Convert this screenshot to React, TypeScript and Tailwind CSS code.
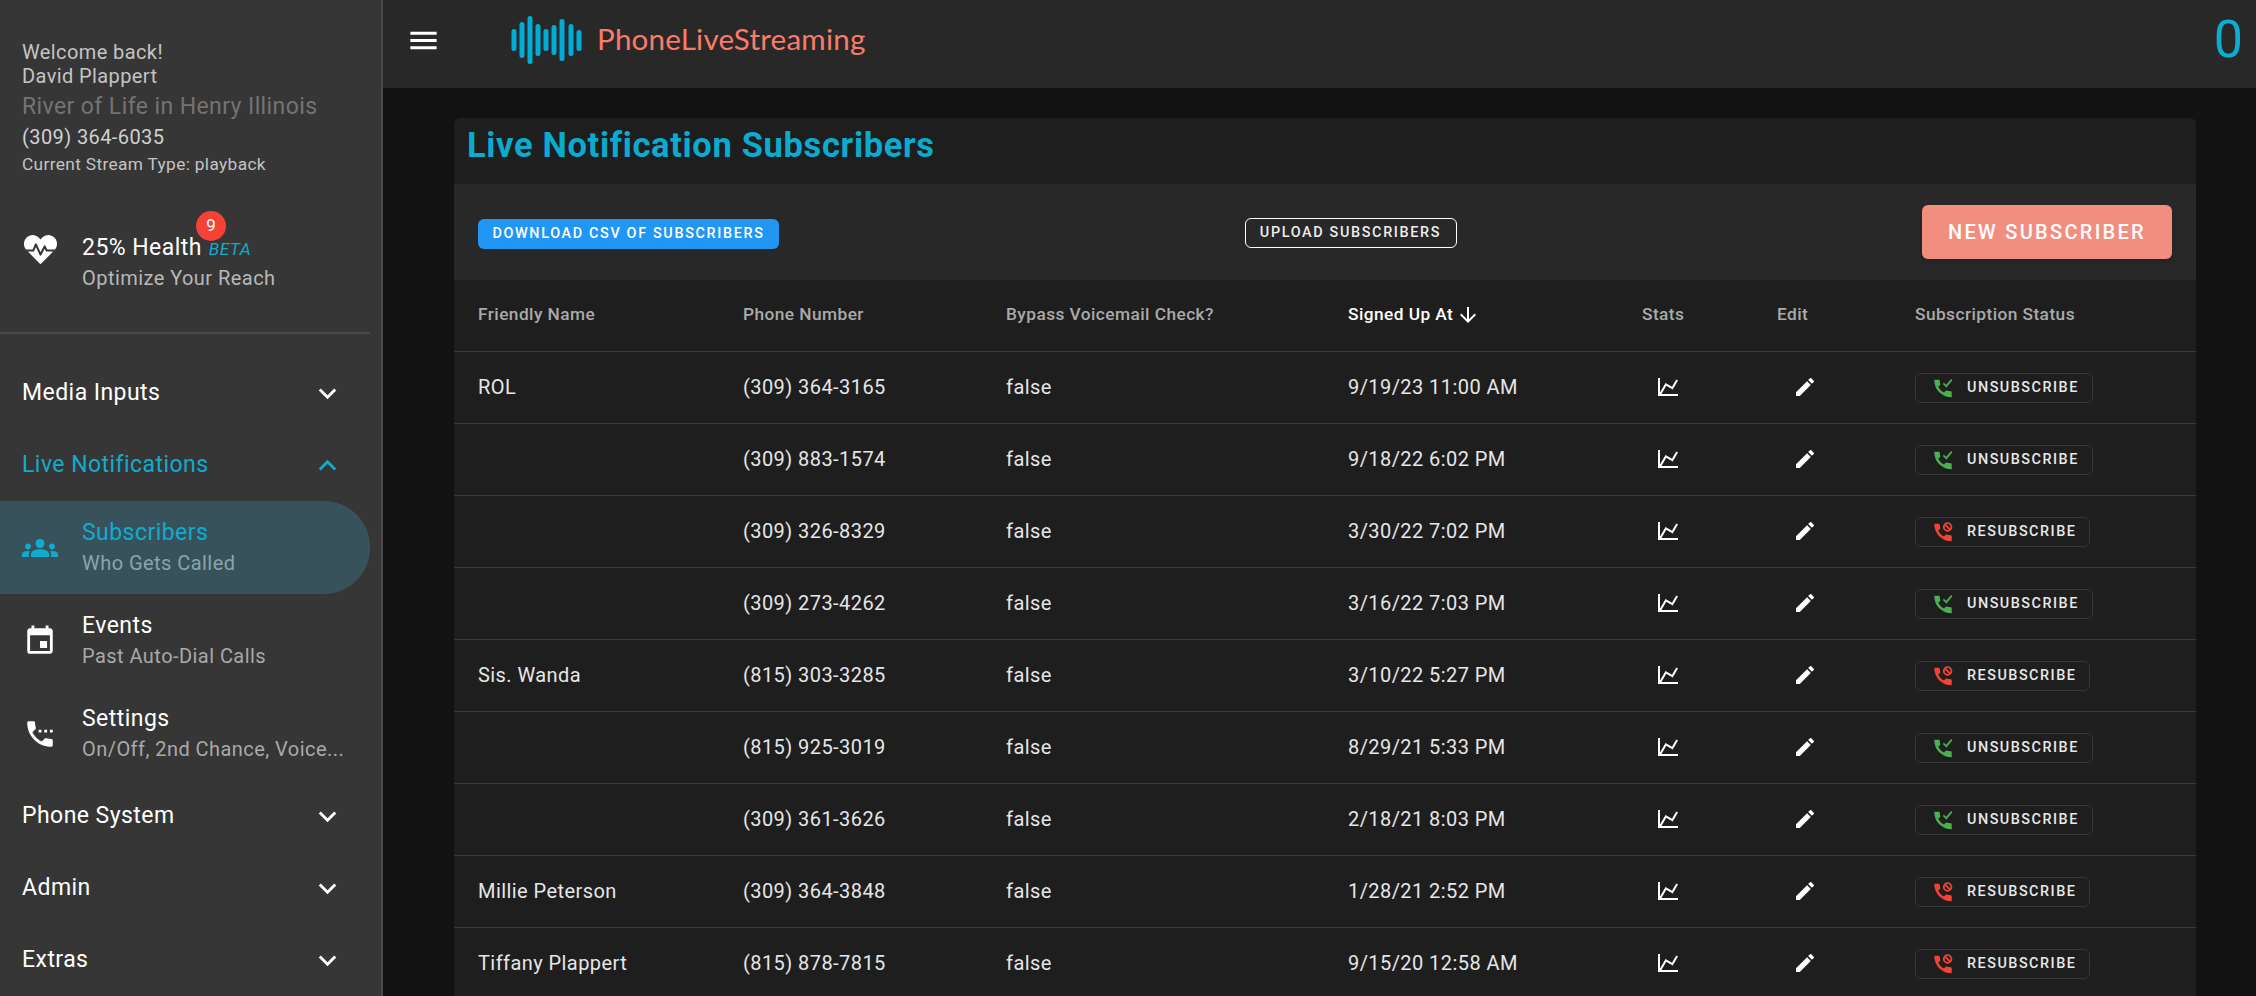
import { FaHeartbeat } from 'react-icons/fa';
import {
  MdArrowDownward,
  MdEdit,
  MdEvent,
  MdExpandLess,
  MdExpandMore,
  MdGroups,
  MdMenu,
  MdSettingsPhone,
} from 'react-icons/md';

type Subscriber = {
  name: string;
  phone: string;
  signedUp: string;
  subscribed: boolean;
};

const SUBSCRIBERS: Subscriber[] = [
  { name: 'ROL', phone: '(309) 364-3165', signedUp: '9/19/23 11:00 AM', subscribed: true },
  { name: '', phone: '(309) 883-1574', signedUp: '9/18/22 6:02 PM', subscribed: true },
  { name: '', phone: '(309) 326-8329', signedUp: '3/30/22 7:02 PM', subscribed: false },
  { name: '', phone: '(309) 273-4262', signedUp: '3/16/22 7:03 PM', subscribed: true },
  { name: 'Sis. Wanda', phone: '(815) 303-3285', signedUp: '3/10/22 5:27 PM', subscribed: false },
  { name: '', phone: '(815) 925-3019', signedUp: '8/29/21 5:33 PM', subscribed: true },
  { name: '', phone: '(309) 361-3626', signedUp: '2/18/21 8:03 PM', subscribed: true },
  { name: 'Millie Peterson', phone: '(309) 364-3848', signedUp: '1/28/21 2:52 PM', subscribed: false },
  { name: 'Tiffany Plappert', phone: '(815) 878-7815', signedUp: '9/15/20 12:58 AM', subscribed: false },
];

// x, top, bottom of each logo bar
const LOGO_BARS = [
  [3, 14, 36],
  [11, 7, 43],
  [19, 1, 49],
  [27, 9, 41],
  [35, 14, 36],
  [43, 10, 40],
  [51, 4, 46],
  [60, 9, 41],
  [68, 15, 36],
];

function Logo() {
  return (
    <div className="flex items-center">
      <svg width="72" height="50" viewBox="0 0 72 50" className="shrink-0">
        {LOGO_BARS.map(([x, top, bottom]) => (
          <rect key={x} x={x - 2.5} y={top} width="5" height={bottom - top} rx="2.5" fill="#00acd3" />
        ))}
      </svg>
      <span className="mb-[2px] ml-[14px] font-['Lato',sans-serif] text-[29.6px] leading-none tracking-[0.2px] text-[#fb7b68]">
        PhoneLiveStreaming
      </span>
    </div>
  );
}

function SectionRow({ label, open }: { label: string; open?: boolean }) {
  return (
    <div
      className={`flex h-[72px] w-[370px] items-center justify-between pl-[22px] pr-[25px] text-[23px] tracking-[0.45px] ${
        open ? 'text-[#0eaccf]' : 'text-white'
      }`}
    >
      <span>{label}</span>
      {open ? <MdExpandLess size={35} /> : <MdExpandMore size={35} />}
    </div>
  );
}

function SubRow({
  icon,
  title,
  sub,
  active,
}: {
  icon: React.ReactNode;
  title: string;
  sub: string;
  active?: boolean;
}) {
  return (
    <div
      className={`flex h-[93px] w-[370px] items-center rounded-r-[46px] pl-[22px] ${
        active ? 'bg-[#38525c]' : ''
      }`}
    >
      <div className={`flex w-[36px] shrink-0 justify-center ${active ? 'text-[#0eaccf]' : 'text-white'}`}>
        {icon}
      </div>
      <div className="ml-[24px] min-w-0 tracking-[0.45px]">
        <div className={`text-[23px] leading-[30px] ${active ? 'text-[#0eaccf]' : 'text-white'}`}>{title}</div>
        <div className={`whitespace-nowrap text-[20px] leading-[30px] ${active ? 'text-[#8ba3ad]' : 'text-[#a9a9a9]'}`}>
          {sub}
        </div>
      </div>
    </div>
  );
}

function Sidebar() {
  return (
    <aside className="w-[383px] shrink-0 border-r-2 border-[#4a4a4a] bg-[#363636] font-['Roboto',sans-serif]">
      <div className="pl-[22px] pt-[40px] tracking-[0.4px]">
        <div className="text-[20px] leading-[24px] text-[#c4c4c4]">Welcome back!</div>
        <div className="text-[20px] leading-[25px] text-[#c4c4c4]">David Plappert</div>
        <div className="text-[23px] leading-[36px] text-[#737373]">River of Life in Henry Illinois</div>
        <div className="text-[20px] leading-[24px] text-[#d0d0d0]">(309) 364-6035</div>
        <div className="mt-[3px] text-[17.3px] leading-[24px] tracking-[0.35px] text-[#c4c4c4]">
          Current Stream Type: playback
        </div>
      </div>

      <div className="relative mt-[58px] flex h-[60px] w-[370px] items-start pl-[22px]">
        <FaHeartbeat size={33} className="ml-[2px] mt-[-1px] shrink-0 text-white" />
        <div className="ml-[25px] tracking-[0.45px]">
          <div className="flex items-baseline text-[23px] leading-[27px] text-white">
            25% Health
            <span className="ml-[7px] text-[17.3px] italic text-[#0eaccf]">BETA</span>
          </div>
          <div className="text-[20px] leading-[30px] text-[#b8b8b8]">Optimize Your Reach</div>
        </div>
        <span className="absolute left-[196px] top-[-23px] flex size-[30px] items-center justify-center rounded-full bg-[#f44336] text-[17px] text-white">
          9
        </span>
      </div>

      <div className="mt-[38px] h-[2px] w-[370px] bg-[#4a4a4a]" />

      <div className="mt-[23px]">
        <SectionRow label="Media Inputs" />
        <SectionRow label="Live Notifications" open />
        <SubRow icon={<MdGroups size={38} />} title="Subscribers" sub="Who Gets Called" active />
        <SubRow icon={<MdEvent size={34} />} title="Events" sub="Past Auto-Dial Calls" />
        <SubRow icon={<MdSettingsPhone size={34} />} title="Settings" sub="On/Off, 2nd Chance, Voice..." />
        <SectionRow label="Phone System" />
        <SectionRow label="Admin" />
        <SectionRow label="Extras" />
      </div>
    </aside>
  );
}

function StatsIcon() {
  return (
    <svg viewBox="0 0 24 24" className="size-[24px] fill-white">
      <path d="M16,11.78L20.24,4.45L21.97,5.45L16.74,14.5L10.23,10.75L5.46,19H22V21H2V3H4V17.54L9.5,8L16,11.78Z" />
    </svg>
  );
}

function StatusButton({ subscribed }: { subscribed: boolean }) {
  return (
    <button className="flex h-[30px] items-center rounded-[6px] border border-[#383838] pl-[17px] pr-[13px] text-[14.4px] font-medium tracking-[1.5px] text-[#e8e8e8]">
      <svg viewBox="0 0 24 24" className={`size-[20px] ${subscribed ? 'text-[#4caf50]' : 'text-[#f44336]'}`}>
        <path
          fill="currentColor"
          d="M1.5 2h6.4l.9 6.2-2.5 2.2c1.6 3.2 3.9 5.4 7 6.9l2.2-2.4 7 1.2V23c-12 0-21-9-21-21z"
        />
        {subscribed ? (
          <path d="M12.5 6.5l3.5 3.3 6.5-7.8" fill="none" stroke="currentColor" strokeWidth="2.2" />
        ) : (
          <>
            <circle cx="17.5" cy="6" r="4.6" fill="none" stroke="currentColor" strokeWidth="2.2" />
            <path d="M14.3 2.8l6.4 6.4" stroke="currentColor" strokeWidth="2.2" />
          </>
        )}
      </svg>
      <span className="ml-[14px]">{subscribed ? 'UNSUBSCRIBE' : 'RESUBSCRIBE'}</span>
    </button>
  );
}

function SubscribersTable() {
  const head = 'text-left text-[17.3px] font-medium tracking-[0.44px] text-[#aaaaaa]';
  const cell = 'text-[20px] tracking-[0.43px] text-[#e6e6e6]';
  return (
    <table className="w-full table-fixed border-collapse">
      <thead>
        <tr className="h-[71px] border-b border-[#383838]">
          <th className={`${head} w-[289px] pl-[24px]`}>Friendly Name</th>
          <th className={`${head} w-[263px]`}>Phone Number</th>
          <th className={`${head} w-[342px]`}>Bypass Voicemail Check?</th>
          <th className={`${head} w-[294px]`}>
            <span className="flex items-center text-white">
              Signed Up At
              <MdArrowDownward size={24} className="ml-[3px]" />
            </span>
          </th>
          <th className={`${head} w-[135px]`}>Stats</th>
          <th className={`${head} w-[138px]`}>Edit</th>
          <th className={head}>Subscription Status</th>
        </tr>
      </thead>
      <tbody>
        {SUBSCRIBERS.map((s) => (
          <tr key={s.phone} className="h-[72px] border-b border-[#383838]">
            <td className={`${cell} pl-[24px]`}>{s.name}</td>
            <td className={cell}>{s.phone}</td>
            <td className={cell}>false</td>
            <td className={cell}>{s.signedUp}</td>
            <td className="pl-[14px]">
              <StatsIcon />
            </td>
            <td className="pl-[16px]">
              <MdEdit size={24} className="text-white" />
            </td>
            <td className="pt-[2px]">
              <StatusButton subscribed={s.subscribed} />
            </td>
          </tr>
        ))}
      </tbody>
    </table>
  );
}

export default function App() {
  return (
    <div className="flex h-[996px] w-[2256px] overflow-hidden bg-[#121212] font-['Roboto',sans-serif]">
      <Sidebar />
      <div className="flex min-w-0 flex-1 flex-col">
        <header className="flex h-[88px] shrink-0 items-center bg-[#282828] pb-[8px] pr-[13px]">
          <MdMenu size={35} className="ml-[23px] text-white" />
          <div className="ml-[70px]">
            <Logo />
          </div>
          <span className="ml-auto text-[52px] leading-none text-[#0eaccf]">0</span>
        </header>
        <main className="min-h-0 flex-1 bg-[#121212] pl-[71px] pt-[30px]">
          <div className="w-[1742px] rounded-t-[6px] bg-[#1e1e1e]">
            <h1 className="h-[66px] pl-[13px] pt-[6px] text-[34.5px] font-bold leading-[42px] tracking-[0.65px] text-[#0aabcf]">
              Live Notification Subscribers
            </h1>
            <div className="flex h-[96px] items-center justify-between bg-[#282828] px-[24px]">
              <button className="mt-[4px] h-[30px] w-[301px] rounded-[6px] bg-[#2196f3] text-[14.4px] font-medium tracking-[1.65px] text-white">
                DOWNLOAD CSV OF SUBSCRIBERS
              </button>
              <button className="mt-[1px] h-[30px] w-[212px] rounded-[6px] border border-white text-[14.4px] font-medium tracking-[1.65px] text-[#eeeeee]">
                UPLOAD SUBSCRIBERS
              </button>
              <button className="h-[54px] w-[250px] rounded-[6px] bg-[#f28e80] text-[20px] font-medium tracking-[2.3px] text-white shadow-md">
                NEW SUBSCRIBER
              </button>
            </div>
            <SubscribersTable />
          </div>
        </main>
      </div>
    </div>
  );
}
